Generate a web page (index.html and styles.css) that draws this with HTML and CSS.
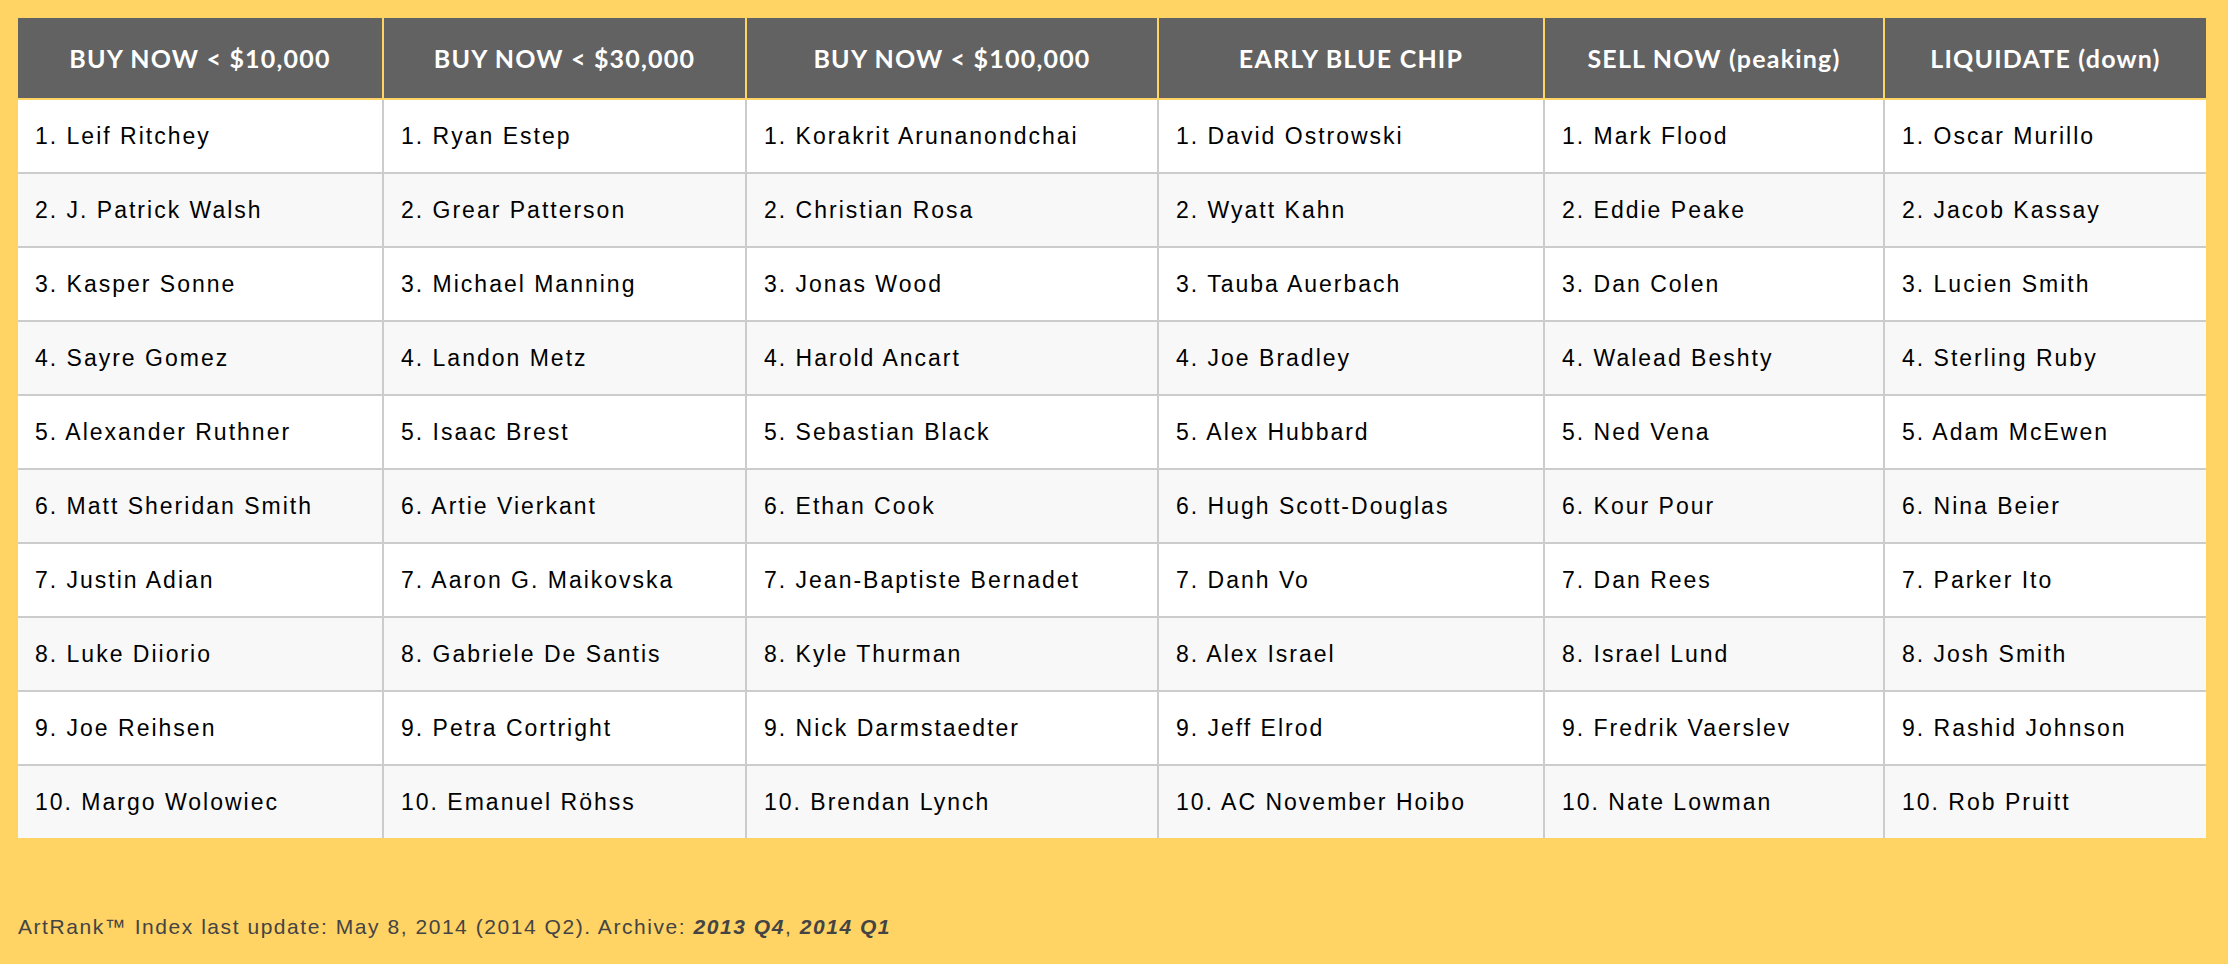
FILE: index.html
```html
<!DOCTYPE html>
<html lang="en">
<head>
<meta charset="utf-8">
<title>ArtRank Index</title>
<link rel="stylesheet" href="styles.css">
</head>
<body>
<table class="rank">
  <colgroup>
    <col class="c1"><col class="c2"><col class="c3"><col class="c4"><col class="c5"><col class="c6">
  </colgroup>
  <thead>
    <tr>
      <th>BUY NOW &lt; $10,000</th>
      <th>BUY NOW &lt; $30,000</th>
      <th>BUY NOW &lt; $100,000</th>
      <th>EARLY BLUE CHIP</th>
      <th>SELL NOW (peaking)</th>
      <th>LIQUIDATE (down)</th>
    </tr>
  </thead>
  <tbody>
    <tr><td>1. Leif Ritchey</td><td>1. Ryan Estep</td><td>1. Korakrit Arunanondchai</td><td>1. David Ostrowski</td><td>1. Mark Flood</td><td>1. Oscar Murillo</td></tr>
    <tr><td>2. J. Patrick Walsh</td><td>2. Grear Patterson</td><td>2. Christian Rosa</td><td>2. Wyatt Kahn</td><td>2. Eddie Peake</td><td>2. Jacob Kassay</td></tr>
    <tr><td>3. Kasper Sonne</td><td>3. Michael Manning</td><td>3. Jonas Wood</td><td>3. Tauba Auerbach</td><td>3. Dan Colen</td><td>3. Lucien Smith</td></tr>
    <tr><td>4. Sayre Gomez</td><td>4. Landon Metz</td><td>4. Harold Ancart</td><td>4. Joe Bradley</td><td>4. Walead Beshty</td><td>4. Sterling Ruby</td></tr>
    <tr><td>5. Alexander Ruthner</td><td>5. Isaac Brest</td><td>5. Sebastian Black</td><td>5. Alex Hubbard</td><td>5. Ned Vena</td><td>5. Adam McEwen</td></tr>
    <tr><td>6. Matt Sheridan Smith</td><td>6. Artie Vierkant</td><td>6. Ethan Cook</td><td>6. Hugh Scott-Douglas</td><td>6. Kour Pour</td><td>6. Nina Beier</td></tr>
    <tr><td>7. Justin Adian</td><td>7. Aaron G. Maikovska</td><td>7. Jean-Baptiste Bernadet</td><td>7. Danh Vo</td><td>7. Dan Rees</td><td>7. Parker Ito</td></tr>
    <tr><td>8. Luke Diiorio</td><td>8. Gabriele De Santis</td><td>8. Kyle Thurman</td><td>8. Alex Israel</td><td>8. Israel Lund</td><td>8. Josh Smith</td></tr>
    <tr><td>9. Joe Reihsen</td><td>9. Petra Cortright</td><td>9. Nick Darmstaedter</td><td>9. Jeff Elrod</td><td>9. Fredrik Vaerslev</td><td>9. Rashid Johnson</td></tr>
    <tr><td>10. Margo Wolowiec</td><td>10. Emanuel Röhss</td><td>10. Brendan Lynch</td><td>10. AC November Hoibo</td><td>10. Nate Lowman</td><td>10. Rob Pruitt</td></tr>
  </tbody>
</table>
<p class="footer">ArtRank™ Index last update: May 8, 2014 (2014 Q2). Archive: <em class="archive">2013 Q4</em>, <em class="archive">2014 Q1</em></p>
</body>
</html>
```
FILE: styles.css
```css
html, body {
  margin: 0;
  padding: 0;
  background: #ffd364;
}
body {
  padding: 18px;
  font-family: "Liberation Sans", Arial, sans-serif;
}
.rank {
  width: 2188px;
  table-layout: fixed;
  border-collapse: collapse;
  border-spacing: 0;
}
.c1 { width: 365px; }
.c2 { width: 363px; }
.c3 { width: 412px; }
.c4 { width: 386px; }
.c5 { width: 340px; }
.c6 { width: 322px; }
.rank th {
  background: #626262;
  color: #fff;
  font-family: Lato, "Liberation Sans", sans-serif;
  font-weight: 700;
  font-size: 25px;
  letter-spacing: 1.2px;
  height: 80px;
  padding: 0;
  text-align: center;
  vertical-align: middle;
  border-left: 2px solid #ffd364;
  border-bottom: 2px solid #ffd364;
}
.rank th:first-child { border-left: 0; }
.rank td {
  height: 72px;
  padding: 0 0 0 17px;
  font-size: 23px;
  letter-spacing: 2px;
  color: #000;
  vertical-align: middle;
  border-left: 2px solid #cccccc;
  border-bottom: 2px solid #cccccc;
  white-space: nowrap;
}
.rank td:first-child { border-left: 0; }
.rank tbody tr:last-child td { border-bottom: 0; }
.rank tbody tr:nth-child(odd) td { background: #ffffff; }
.rank tbody tr:nth-child(even) td { background: #f8f8f8; }
.footer {
  margin: 77px 0 0 0;
  font-size: 21px;
  line-height: 24px;
  letter-spacing: 1.55px;
  color: #444;
}
.archive {
  font-style: italic;
  font-weight: 700;
}
```
